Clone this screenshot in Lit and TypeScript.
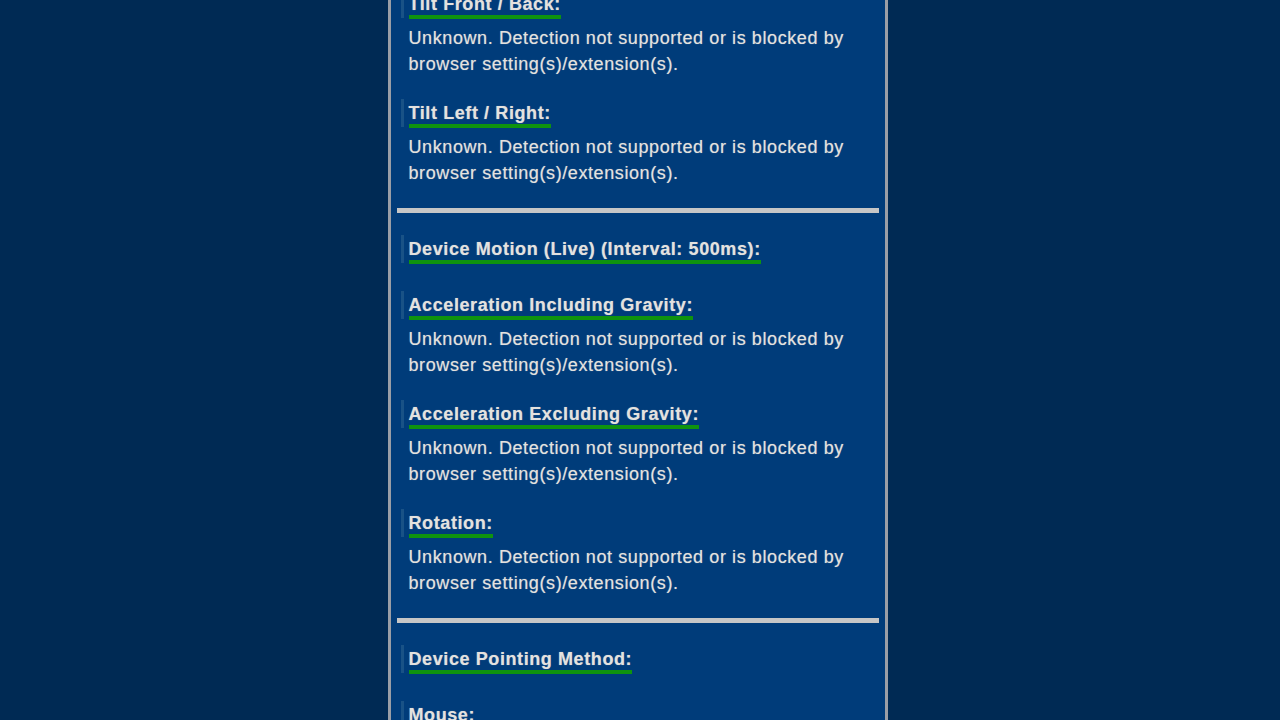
import { LitElement, html, css, nothing } from "lit";
import { customElement } from "lit/decorators.js";

interface Entry {
  title: string;
  value?: string;
}

const UNKNOWN =
  "Unknown. Detection not supported or is blocked by browser setting(s)/extension(s).";

const GROUPS: Entry[][] = [
  [
    { title: "Tilt Front / Back:", value: UNKNOWN },
    { title: "Tilt Left / Right:", value: UNKNOWN },
  ],
  [
    { title: "Device Motion (Live) (Interval: 500ms):" },
    { title: "Acceleration Including Gravity:", value: UNKNOWN },
    { title: "Acceleration Excluding Gravity:", value: UNKNOWN },
    { title: "Rotation:", value: UNKNOWN },
  ],
  [{ title: "Device Pointing Method:" }, { title: "Mouse:" }],
];

@customElement("app-root")
export class AppRoot extends LitElement {
  static styles = css`
    :host {
      display: block;
      height: 100vh;
      overflow: hidden;
      background: #002a54;
      color: #e4e2df;
      font: 18px/26px "Liberation Sans", Arial, sans-serif;
      letter-spacing: 0.033em;
      text-shadow: 0 0 1px #e4e2df80;
    }
    .page {
      display: flex;
      justify-content: center;
      align-items: flex-start;
      padding-right: 5px;
    }
    .panel {
      box-sizing: border-box;
      width: 100%;
      max-width: 500px;
      margin-top: -10px;
      padding: 0 6px 22px;
      border: solid #9a9ea6;
      border-width: 0 3px;
      background: #003c7a;
    }
    .group + .group {
      margin-top: 22px;
      padding-top: 22px;
      border-top: 5px solid #c6c6c6;
    }
    .entry {
      padding: 0 4px;
    }
    .entry + .entry {
      margin-top: 22px;
    }
    .bare + .entry {
      margin-top: 28px;
    }
    .title {
      margin: 0;
      padding-left: 5px;
      border-left: 3px solid #195286;
      font-size: 18px;
      line-height: 28px;
    }
    .label {
      padding-bottom: 1px;
      border-bottom: 4px solid #0f930f;
    }
    .value {
      margin: 7px 8px 0;
    }
  `;

  render() {
    return html`
      <main class="page">
        <div class="panel">
          ${GROUPS.map(
            (group) => html`<section class="group">
              ${group.map(
                (e) => html`<div class="entry ${e.value ? "" : "bare"}">
                  <h2 class="title"><span class="label">${e.title}</span></h2>
                  ${e.value ? html`<p class="value">${e.value}</p>` : nothing}
                </div>`
              )}
            </section>`
          )}
        </div>
      </main>
    `;
  }
}
